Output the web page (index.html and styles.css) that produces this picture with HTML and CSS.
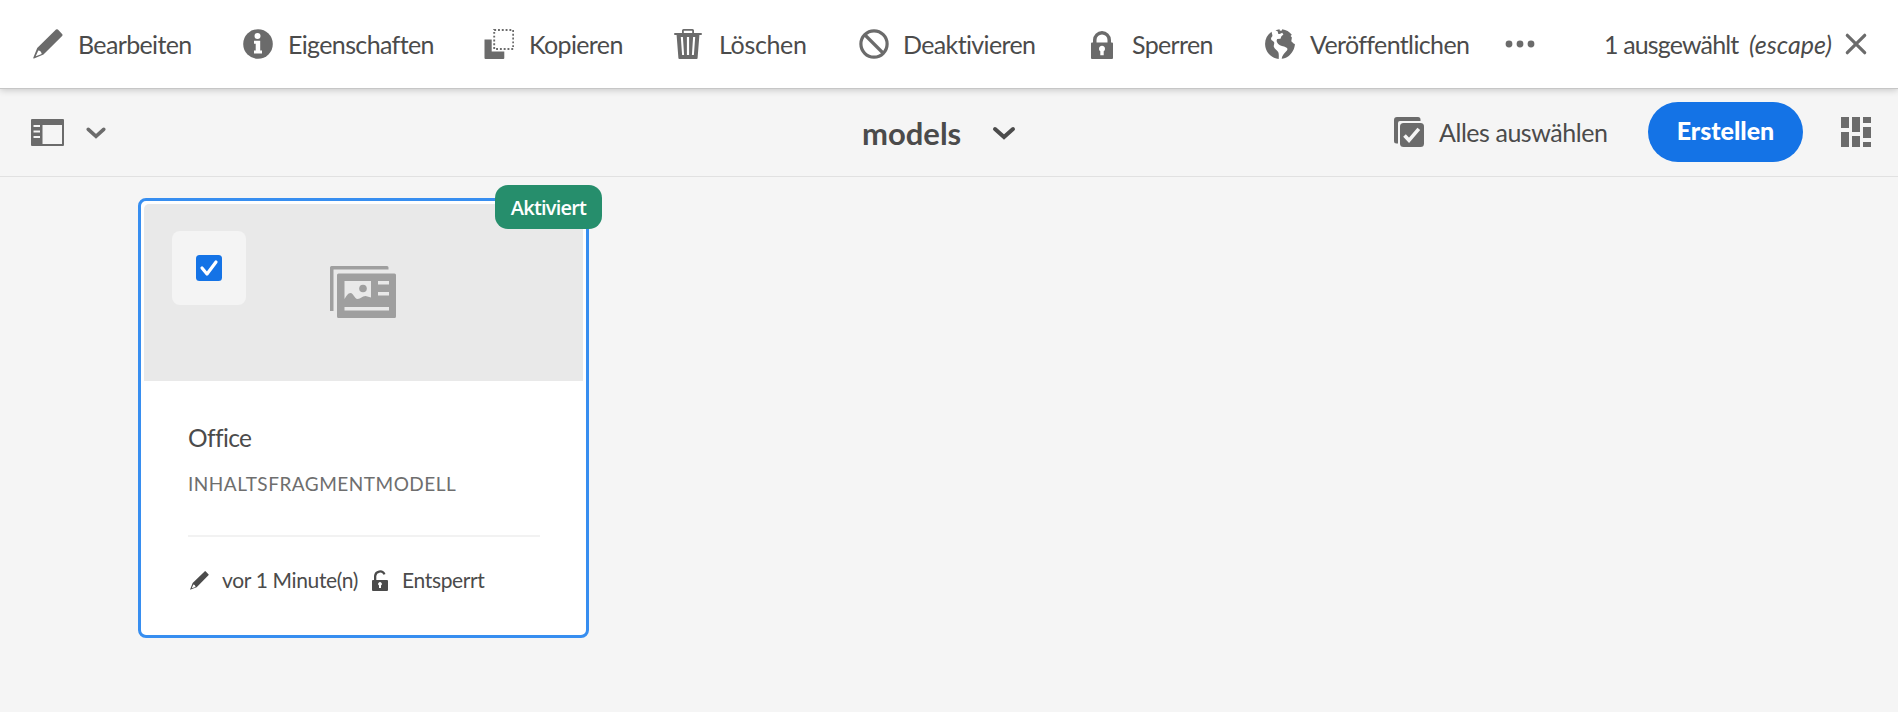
FILE: index.html
```
<!DOCTYPE html>
<html lang="de">
<head>
<meta charset="utf-8">
<title>models</title>
<link rel="stylesheet" href="styles.css">
</head>
<body>
<svg class="defs" width="0" height="0" aria-hidden="true">
  <symbol id="pencil" viewBox="0 0 30 30"><path fill-rule="evenodd" d="M23 .6a1.4 1.4 0 0 1 1.9 0l4.2 4.4a1.4 1.4 0 0 1 0 1.900L10.500 25.500 1 29.400a.5.5 0 0 1-.7-.7L4.200 19.100ZM5.300 21.500 2.700 27.300 8.700 25.100C8.500 23.100 7.300 21.700 5.300 21.500Z"/></symbol>
</svg>
<header class="actionbar">
  <div class="action a-edit"><svg class="icon" viewBox="0 0 30 30"><use href="#pencil"/></svg><span class="label">Bearbeiten</span></div>
  <div class="action a-info"><svg class="icon" viewBox="0 0 30 30"><circle cx="15" cy="15" r="14.800"/><g fill="#fff"><circle cx="14.500" cy="6.900" r="3"/><path d="M11 11.800h6.200v9.700H19v3H11v-3h1.700v-6.700H11Z"/></g></svg><span class="label">Eigenschaften</span></div>
  <div class="action a-copy"><svg class="icon" viewBox="0 0 30 30"><path d="M.5 10.500h7.200v12h12.600V29a1 1 0 0 1-1 1H1.500a1 1 0 0 1-1-1Z"/><rect x="10.200" y="1" width="19" height="19" fill="none" stroke="#6b6b6b" stroke-width="1.900" stroke-dasharray="1.900 1.900"/></svg><span class="label">Kopieren</span></div>
  <div class="action a-del"><svg class="icon" viewBox="0 0 30 30"><path fill-rule="evenodd" d="M9 4V1.500A1.500 1.500 0 0 1 10.500 0h9A1.500 1.500 0 0 1 21 1.500V4h7a1 1 0 0 1 0 2h-1.600L24.600 29a1 1 0 0 1-1 1H6.400a1 1 0 0 1-1-1L3.600 6H2a1 1 0 0 1 0-2ZM10.800 1.800V4h8.400V1.800ZM7.800 8l1.300 18h2L9.900 8Zm6.100 0v18h2.200V8Zm6.200 0-1.200 18h2l1.300-18Z"/></svg><span class="label">Löschen</span></div>
  <div class="action a-deact"><svg class="icon" viewBox="0 0 30 30"><g fill="none" stroke="#6b6b6b" stroke-width="3.200"><circle cx="15" cy="15" r="13.100"/><path d="m6 6 18 18"/></g></svg><span class="label">Deaktivieren</span></div>
  <div class="action a-lock"><svg class="icon" viewBox="0 0 30 30"><path fill-rule="evenodd" d="M6 13.500V11a9 9 0 0 1 18 0v2.500h1a1 1 0 0 1 1 1V29a1 1 0 0 1-1 1H5a1 1 0 0 1-1-1V14.500a1 1 0 0 1 1-1Zm3.500 0h11V11a5.500 5.500 0 0 0-11 0Zm3.800 8.800v4h3.400v-4a3 3 0 1 0-3.400 0Z"/></svg><span class="label">Sperren</span></div>
  <div class="action a-pub"><svg class="icon" viewBox="0 0 30 30"><path d="M6.500 2.800C2.200 5.800 0 10 .1 15.200.3 23 6.500 29.300 13.700 29.900c.2-3 .2-5.100-.4-6.600-.8-2-3.600-3.300-4.400-5.300-.6-1.700.8-3.100.2-4.700-.5-1.300-2.500-1.500-3-3-.5-1.800 1.500-2.300 1.300-4Z"/><path d="m10.500 1.200 4-1 .4 1.500 2-.3.300-1.200c4 .6 7.300 2.500 9.600 5.500l-1.200 1.400 1.300 1.400-.6 3.700 2.600 2.500 1 .3c-.1 2.300-.7 4.500-1.700 6.300-2.400 5-6.500 8-11.500 8.500.3-2.800 2-5 4.300-7.200 1.500-1.500 2.200-3.200.2-4.200-2.800-1.400-5.900-1.200-8-3.400-1.300-1.400-2.200-3.300-1-5l3.300-.3.900-2.400 2-1.900-1.200-1.600-2.500 1.300-1.600-.4-.3-2.300Z"/></svg><span class="label">Veröffentlichen</span></div>
  <svg class="dots" viewBox="0 0 30 8"><circle cx="4" cy="4" r="3.400"/><circle cx="15" cy="4" r="3.400"/><circle cx="26" cy="4" r="3.400"/></svg>
  <div class="selection"><span class="label count">1 ausgewählt</span><em class="label escape">(escape)</em>
  <svg class="close" viewBox="0 0 22 22"><path d="m2.300 2.300 17.400 17.400m0-17.400L2.300 19.700" fill="none" stroke="#6b6b6b" stroke-width="3.200" stroke-linecap="round"/></svg></div>
</header>
<nav class="toolbar">
  <div class="rail"><svg class="rail-icon" viewBox="0 0 33 27"><path fill-rule="evenodd" d="M1 0h31a1 1 0 0 1 1 1v25a1 1 0 0 1-1 1H1a1 1 0 0 1-1-1V1a1 1 0 0 1 1-1Zm10.500 6v19H31V6ZM2.500 6v2H9V6Zm0 5.500v2H9v-2Zm0 5.500v2H9v-2Z"/></svg>
  <svg class="chev-s" viewBox="0 0 20 12"><path d="m2.300 2.300 7.700 7 7.700-7" fill="none" stroke="#6b6b6b" stroke-width="3.600" stroke-linecap="round"/></svg></div>
  <div class="title"><h1>models</h1><svg class="chev-l" viewBox="0 0 24 14"><path d="m3 3 9 8 9-8" fill="none" stroke="#4b4b4b" stroke-width="4" stroke-linecap="round"/></svg></div>
  <div class="tools">
    <svg class="icon sel-icon" viewBox="0 0 30 30"><path d="M4 26.500H2.500A2.500 2.500 0 0 1 0 24V3a3 3 0 0 1 3-3h21a2.500 2.500 0 0 1 2.500 2.500V4H6a2 2 0 0 0-2 2Z"/><rect x="6" y="6" width="24" height="24" rx="3.500"/><path d="m10.500 18.500 4.500 4.800 9.800-11.500" fill="none" stroke="#f5f5f5" stroke-width="3.600"/></svg>
    <span class="label select-all">Alles auswählen</span>
    <button class="create">Erstellen</button>
    <svg class="icon view-icon" viewBox="0 0 30 30"><path d="M0 0h8v11H0ZM0 15h8v15H0ZM11 0h8v15h-8ZM11 19h8v11h-8ZM22 0h8v6h-8ZM22 10h8v11h-8ZM22 25h8v5h-8Z"/></svg>
  </div>
</nav>
<main class="content">
  <article class="card">
    <span class="badge">Aktiviert</span>
    <div class="thumb">
      <div class="check"><svg width="26" height="26" viewBox="0 0 26 26"><rect width="26" height="26" rx="3.500" fill="#1473e6"/><path d="m6 13 5 6 9-12" fill="none" stroke="#fff" stroke-width="3.200" stroke-linecap="round" stroke-linejoin="round"/></svg></div>
      <svg class="media" viewBox="0 0 66 52"><path fill-rule="evenodd" d="M0 45V1.500A1.500 1.500 0 0 1 1.500 0H57a1.500 1.500 0 0 1 1.500 1.500V3.500H3.500V45ZM8.500 7.500H64.500A1.500 1.500 0 0 1 66 9V50.500A1.500 1.500 0 0 1 64.500 52H8.500A1.500 1.500 0 0 1 7 50.500V9A1.500 1.500 0 0 1 8.500 7.500ZM14.500 15v18c2-3 3.500-6 6-6 3 0 4 6 7 6 3.500 0 4.500-3 8-3l5.500 1.500V15ZM48 15v3.500H59V15Zm0 11v3.500H59V26ZM14.500 41v3.500H59V41Z"/><circle cx="33" cy="22.500" r="3.800"/></svg>
    </div>
    <div class="info">
      <h2>Office</h2>
      <p class="type">INHALTSFRAGMENTMODELL</p>
      <div class="meta">
        <svg class="m-pencil" viewBox="0 0 30 30"><use href="#pencil"/></svg><span class="modified">vor 1 Minute(n)</span>
        <svg class="m-lock" viewBox="0 0 16 21"><path fill-rule="evenodd" d="M2 10V6a6 6 0 0 1 11.500-2l-2 .8A3.800 3.800 0 0 0 4.300 6v4H15a1 1 0 0 1 1 1v9a1 1 0 0 1-1 1H1a1 1 0 0 1-1-1v-9a1 1 0 0 1 1-1Zm5 5.500V18h2v-2.500a1.800 1.800 0 1 0-2 0Z"/></svg><span>Entsperrt</span>
      </div>
    </div>
  </article>
</main>
</body>
</html>
```
FILE: styles.css
```
* { box-sizing: border-box; }
body { margin: 0; height: 712px; overflow: hidden; background: #f5f5f5; color: #4b4b4b; font-family: Lato, "Open Sans", sans-serif; font-size: 25px; }
.defs { position: absolute; }
svg { fill: #6b6b6b; flex: none; display: block; }
span, em, h1, h2, p { white-space: nowrap; }
.label { display: block; line-height: 32px; letter-spacing: -.63px; }
.actionbar { position: relative; height: 89px; background: #fff; border-bottom: 1px solid #c6c6c6; box-shadow: 0 1px 7px rgba(0,0,0,.2); display: flex; align-items: center; padding: 0 31px 0 33px; }
.action { display: flex; align-items: center; gap: 15px; flex: none; }
.icon { width: 30px; height: 30px; }
.a-edit { width: 167px; }
.a-info { margin-left: 43px; width: 241px; }
.a-copy { width: 189px; }
.a-del { width: 186px; gap: 16px; }
.a-del .label { letter-spacing: -.35px; }
.a-deact { width: 228px; gap: 14px; }
.a-lock { width: 178px; }
.a-pub { width: 240px; }
.dots { width: 30px; height: 8px; }
.selection { margin-left: auto; display: flex; align-items: center; }
.count { width: 145px; letter-spacing: -.85px; }
.escape { width: 96px; letter-spacing: 0; }
.close { width: 22px; height: 22px; }
.toolbar { height: 88px; border-bottom: 1px solid #e1e1e1; display: grid; grid-template-columns: 862px 532px 1fr; align-items: center; }
.rail { display: flex; align-items: center; padding-left: 31px; gap: 22px; }
.rail-icon { width: 33px; height: 27px; }
.chev-s { width: 20px; height: 12px; }
.title { display: flex; align-items: center; gap: 29px; }
h1 { margin: 0; width: 101px; font-size: 31px; line-height: 36px; font-weight: 700; }
.chev-l { width: 24px; height: 14px; }
.tools { display: flex; align-items: center; padding-bottom: 1px; }
.select-all { margin-left: 15px; width: 209px; letter-spacing: -.45px; }
.create { width: 155px; height: 60px; border: 0; border-radius: 30px; background: #1473e6; color: #fff; font: inherit; font-weight: 900; padding: 0 0 4px; }
.view-icon { margin-left: 38px; }
.content { padding: 21px 0 0 138px; }
.card { position: relative; width: 451px; height: 440px; border: 3px solid #378ef0; border-radius: 8px; background: #fff; padding: 3px; }
.thumb { height: 177px; background: #e9e9e9; border-radius: 5px 5px 0 0; display: flex; align-items: flex-start; padding: 27px 0 0 28px; }
.check { width: 74px; height: 74px; border-radius: 8px; background: #f4f4f4; display: grid; place-items: center; }
.media { width: 66px; height: 52px; margin: 35px 0 0 84px; fill: #9f9f9f; }
.badge { position: absolute; left: 354px; top: -16px; width: 107px; height: 44px; border-radius: 13px; background: #268e6c; color: #fff; font-family: "Open Sans", sans-serif; font-size: 20px; font-weight: 600; letter-spacing: -.8px; display: grid; place-items: center; }
.info { padding: 40px 43px 0 44px; }
h2 { margin: 0; font-size: 24.500px; font-weight: 400; line-height: 34px; letter-spacing: -.6px; }
.type { margin: 15px 0 0; font-size: 19px; line-height: 28px; color: #6e6e6e; letter-spacing: .5px; }
.meta { margin-top: 37px; border-top: 2px solid #f2f2f2; padding-top: 27px; display: flex; align-items: center; font-size: 21px; line-height: 32px; letter-spacing: -.35px; }
.meta svg { fill: #4b4b4b; }
.m-pencil { width: 19px; height: 19px; margin: 0 13px 0 2px; }
.modified { width: 150px; }
.m-lock { width: 16px; height: 21px; margin-right: 14px; }
```
